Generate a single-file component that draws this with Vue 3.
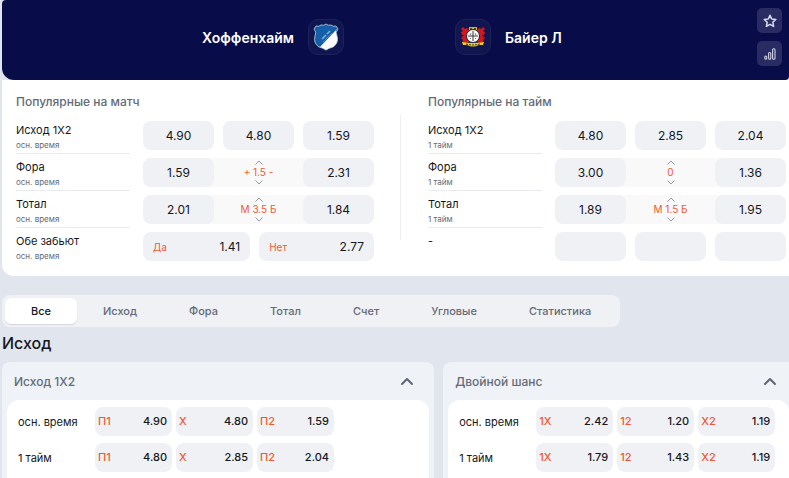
<script setup>
import { ref } from "vue";

const popular = [
  {
    title: "Популярные на матч",
    rows: [
      { name: "Исход 1X2", sub: "осн. время", odds: ["4.90", "4.80", "1.59"] },
      { name: "Фора", sub: "осн. время", odds: ["1.59", "2.31"], line: "+ 1.5 -" },
      { name: "Тотал", sub: "осн. время", odds: ["2.01", "1.84"], line: "М 3.5 Б" },
      {
        name: "Обе забьют",
        sub: "осн. время",
        pair: [
          { label: "Да", value: "1.41" },
          { label: "Нет", value: "2.77" },
        ],
      },
    ],
  },
  {
    title: "Популярные на тайм",
    rows: [
      { name: "Исход 1X2", sub: "1 тайм", odds: ["4.80", "2.85", "2.04"] },
      { name: "Фора", sub: "1 тайм", odds: ["3.00", "1.36"], line: "0" },
      { name: "Тотал", sub: "1 тайм", odds: ["1.89", "1.95"], line: "М 1.5 Б" },
      { name: "-", sub: "", odds: ["", "", ""] },
    ],
  },
];

const tabs = ["Все", "Исход", "Фора", "Тотал", "Счет", "Угловые", "Статистика"];
const activeTab = ref("Все");

const markets = ref([
  {
    title: "Исход 1X2",
    open: true,
    keys: ["П1", "X", "П2"],
    rows: [
      { name: "осн. время", odds: ["4.90", "4.80", "1.59"] },
      { name: "1 тайм", odds: ["4.80", "2.85", "2.04"] },
    ],
  },
  {
    title: "Двойной шанс",
    open: true,
    keys: ["1X", "12", "X2"],
    rows: [
      { name: "осн. время", odds: ["2.42", "1.20", "1.19"] },
      { name: "1 тайм", odds: ["1.79", "1.43", "1.19"] },
    ],
  },
]);
</script>

<template>
  <main class="page">
    <header class="match">
      <div class="team home">
        <span>Хоффенхайм</span>
        <div class="logo">
          <svg width="26" height="28" viewBox="0 0 26 28">
            <path
              d="M3 3Q6 4 8 2Q11 3 13 1Q15 3 18 2Q20 4 23 3L25 6Q22 9 24 13Q26 20 20 24Q16 25 13 27Q10 25 6 24Q0 20 2 13Q4 9 1 6Z"
              fill="#155fa9"
            />
            <path d="M24 6Q22 9 24 13Q26 20 20 24Q16 25 13 27Q10 25 7 24Z" fill="#fff" />
            <path
              d="M3 3Q6 4 8 2Q11 3 13 1Q15 3 18 2Q20 4 23 3L25 6Q22 9 24 13Q26 20 20 24Q16 25 13 27Q10 25 6 24Q0 20 2 13Q4 9 1 6Z"
              fill="none"
              stroke="#c3d8ec"
              stroke-width=".8"
            />
            <path d="M9 16l4-4M14 11l3-3" stroke="#86b1da" stroke-width="1.5" fill="none" />
            <path d="M10 19L19 10" stroke="#5b93c9" stroke-width=".8" fill="none" />
          </svg>
        </div>
      </div>
      <div class="team away">
        <div class="logo">
          <svg width="26" height="24" viewBox="0 0 26 24">
            <path
              d="M9 5L7 3L5 4L3 2L1 4L3 6L1 7L2 10L4 10L1 13L3 15L2 18L5 19L9 17ZM17 5L19 3L21 4L23 2L25 4L23 6L25 7L24 10L22 10L25 13L23 15L24 18L21 19L17 17Z"
              fill="#cf171e"
            />
            <path d="M9 2h8v4H9z" fill="#c9b925" />
            <path d="M10 3h2v2h-2zM14 3h2v2h-2z" fill="#514c12" />
            <circle cx="13" cy="11" r="6.5" fill="#fff" stroke="#20203a" />
            <path d="M13 6v10M8 11h10" stroke="#333" fill="none" />
            <path d="M11 8l-1 2M15 8l1 2M11 14l-1-1M15 14l1-1" stroke="#777" fill="none" />
            <path d="M2 17Q13 19 24 17L23 20H19Q13 23 7 20H3Z" fill="#e6cc25" />
            <path d="M6 19Q13 21 20 19" stroke="#3b370f" stroke-dasharray="2 1" fill="none" />
          </svg>
        </div>
        <span>Байер Л</span>
      </div>
      <div class="actions">
        <button type="button" aria-label="В избранное">
          <svg width="14" height="14" viewBox="0 0 14 14">
            <path
              d="M7 1.2L8.7 5L12.8 5.4L9.8 8.2L10.6 12.4L7 10.3L3.4 12.4L4.2 8.2L1.2 5.4L5.3 5Z"
              fill="none"
              stroke="#d9dbee"
              stroke-width="1.5"
              stroke-linejoin="round"
            />
          </svg>
        </button>
        <button type="button" aria-label="Статистика матча">
          <svg width="14" height="14" viewBox="0 0 14 14">
            <g fill="none" stroke="#cfd0e4" stroke-width="1.1">
              <rect x="1.8" y="9" width="2" height="3.2" rx="1" />
              <rect x="5.6" y="5.5" width="2.2" height="6.7" rx="1" />
              <rect x="9.6" y="1.8" width="2.4" height="10.4" rx="1" />
            </g>
          </svg>
        </button>
      </div>
    </header>

    <section class="popular">
      <template v-for="(col, i) in popular" :key="col.title">
        <div v-if="i" class="divider"></div>
        <div class="popular-col">
          <h2>{{ col.title }}</h2>
          <div v-for="row in col.rows" :key="row.name" class="row">
            <div class="row-label">
              <div class="name">{{ row.name }}</div>
              <div class="sub">{{ row.sub }}</div>
            </div>
            <div v-if="row.pair" class="odds pair">
              <button v-for="p in row.pair" :key="p.label" type="button" class="odd">
                <span class="key">{{ p.label }}</span>
                <span>{{ p.value }}</span>
              </button>
            </div>
            <div v-else-if="row.line" class="odds with-line">
              <button type="button" class="odd">{{ row.odds[0] }}</button>
              <div class="line">
                <button type="button" aria-label="Больше">
                  <svg width="8" height="5" viewBox="0 0 8 5">
                    <path d="M.5 4.5L4 1L7.5 4.5" fill="none" stroke="#989ba2" />
                  </svg>
                </button>
                <span>{{ row.line }}</span>
                <button type="button" aria-label="Меньше">
                  <svg width="8" height="5" viewBox="0 0 8 5">
                    <path d="M.5 .5L4 4L7.5 .5" fill="none" stroke="#989ba2" />
                  </svg>
                </button>
              </div>
              <button type="button" class="odd">{{ row.odds[1] }}</button>
            </div>
            <div v-else class="odds">
              <button v-for="(o, n) in row.odds" :key="n" type="button" class="odd" :disabled="!o">
                {{ o }}
              </button>
            </div>
          </div>
        </div>
      </template>
    </section>

    <nav class="tabs">
      <button
        v-for="tab in tabs"
        :key="tab"
        type="button"
        :class="{ active: tab === activeTab }"
        @click="activeTab = tab"
      >
        {{ tab }}
      </button>
    </nav>

    <h1>Исход</h1>

    <div class="markets">
      <section v-for="m in markets" :key="m.title" class="market">
        <button type="button" class="market-head" @click="m.open = !m.open">
          <span>{{ m.title }}</span>
          <svg :class="{ closed: !m.open }" width="14" height="10" viewBox="0 0 14 10">
            <path
              d="M2 8L7 3L12 8"
              fill="none"
              stroke="#5f6573"
              stroke-width="2"
              stroke-linecap="round"
              stroke-linejoin="round"
            />
          </svg>
        </button>
        <div v-if="m.open" class="market-body">
          <div v-for="row in m.rows" :key="row.name" class="market-row">
            <span class="period">{{ row.name }}</span>
            <button v-for="(o, n) in row.odds" :key="n" type="button" class="bet">
              <span class="key">{{ m.keys[n] }}</span>
              <span>{{ o }}</span>
            </button>
          </div>
        </div>
      </section>
    </div>
  </main>
</template>

<style>
body {
  background: #e1e5ee;
}
</style>

<style scoped>
.page {
  padding-left: 2px;
  font-family: Inter, "Liberation Sans", sans-serif;
  color: #15171c;
}

button {
  margin: 0;
  padding: 0;
  border: 0;
  background: none;
  font: inherit;
  color: inherit;
  cursor: pointer;
}

svg {
  display: block;
}

h1,
h2 {
  margin: 0;
  font-weight: 500;
}

.match {
  position: relative;
  display: grid;
  grid-template-columns: 1fr 1fr;
  gap: 111px;
  align-items: center;
  height: 80px;
  padding: 0 0 6px 8px;
  box-sizing: border-box;
  border-radius: 4px 0 4px 12px;
  background: #080d4a;
  color: #fff;
  font-size: 14px;
  font-weight: 600;
}

.team {
  display: flex;
  align-items: center;
  gap: 14px;
}

.home {
  justify-content: flex-end;
}

.logo {
  display: flex;
  align-items: center;
  justify-content: center;
  width: 36px;
  height: 36px;
  box-sizing: border-box;
  border: 1px solid #1d2158;
  border-radius: 10px;
  background: #121650;
}

.actions {
  position: absolute;
  top: 8px;
  right: 7px;
  display: grid;
  gap: 8px;
}

.actions button {
  display: flex;
  align-items: center;
  justify-content: center;
  width: 25px;
  height: 25px;
  border-radius: 5px;
  background: #292c63;
}

.popular {
  display: flex;
  gap: 27px;
  padding: 12px 3px 7px 14px;
  border-radius: 0 0 0 12px;
  background: #fff;
}

.divider {
  width: 1px;
  margin: 23px 0 29px -1px;
  background: #eeeff1;
}

.popular-col {
  flex: 1;
}

h2 {
  margin-bottom: 9px;
  font-size: 12px;
  line-height: 20px;
  color: #656a76;
}

.row {
  display: grid;
  grid-template-columns: 114px 1fr;
  gap: 13px;
  height: 37px;
}

.row-label {
  height: 32px;
  border-bottom: 1px solid #eaebee;
}

.row:last-child .row-label {
  border: 0;
}

.name {
  font-size: 11px;
  line-height: 18px;
}

.sub {
  font-size: 8px;
  line-height: 13px;
  color: #656a76;
}

.odds {
  display: grid;
  grid-template-columns: repeat(3, 1fr);
  gap: 9px;
  height: 29px;
}

.pair {
  grid-template-columns: 14fr 15fr;
}

.with-line {
  gap: 0;
  grid-template-columns: 71px 1fr 71px;
  border-radius: 8px;
  background: #f9f9fa;
}

.odd {
  border-radius: 8px;
  background: #f0f1f5;
  font-size: 12px;
}

.pair .odd {
  display: flex;
  align-items: center;
  justify-content: space-between;
  padding: 0 10px;
}

.key {
  color: #f0592f;
}

.pair .key,
.line {
  font-size: 10px;
}

.line {
  display: flex;
  flex-direction: column;
  align-items: center;
  justify-content: center;
  gap: 1px;
  line-height: 13px;
  color: #f0592f;
}

.tabs {
  display: inline-flex;
  margin-top: 19px;
  padding: 3px;
  border-radius: 8px;
  background: #eff1f5;
  font-size: 11px;
  font-weight: 500;
  line-height: 26px;
  color: #656a76;
}

.tabs button {
  padding: 0 26px;
  border-radius: 6px;
}

.tabs .active {
  background: #fff;
  box-shadow: 0 1px 1px #d3d6de;
  color: #15171c;
}

h1 {
  margin: 4px 0 7px;
  font-size: 16px;
  line-height: 24px;
}

.markets {
  display: grid;
  grid-template-columns: 5fr 4fr;
  gap: 9px;
}

.market {
  padding: 0 5px;
  border-radius: 8px 8px 0 0;
  background: #eff2f6;
}

.market:last-child {
  padding-right: 0;
  border-top-right-radius: 0;
}

.market-head {
  display: flex;
  align-items: center;
  justify-content: space-between;
  width: 100%;
  height: 38px;
  padding: 0 15px 0 7px;
  font-size: 12px;
  font-weight: 500;
  color: #656a76;
}

.market:last-child .market-head {
  padding-right: 12px;
}

.closed {
  transform: rotate(180deg);
}

.market-body {
  display: grid;
  gap: 7px;
  padding: 7px 11px 6px;
  border-radius: 12px 12px 0 0;
  background: #fff;
}

.market-row {
  display: grid;
  grid-template-columns: 73px repeat(3, 77px);
  gap: 4px;
  align-items: center;
}

.period {
  font-size: 11px;
}

.bet {
  display: flex;
  align-items: center;
  justify-content: space-between;
  height: 29px;
  padding: 0 5px 2px 3px;
  border-radius: 8px;
  background: #eff1f5;
  font-size: 11px;
  font-weight: 500;
}
</style>
